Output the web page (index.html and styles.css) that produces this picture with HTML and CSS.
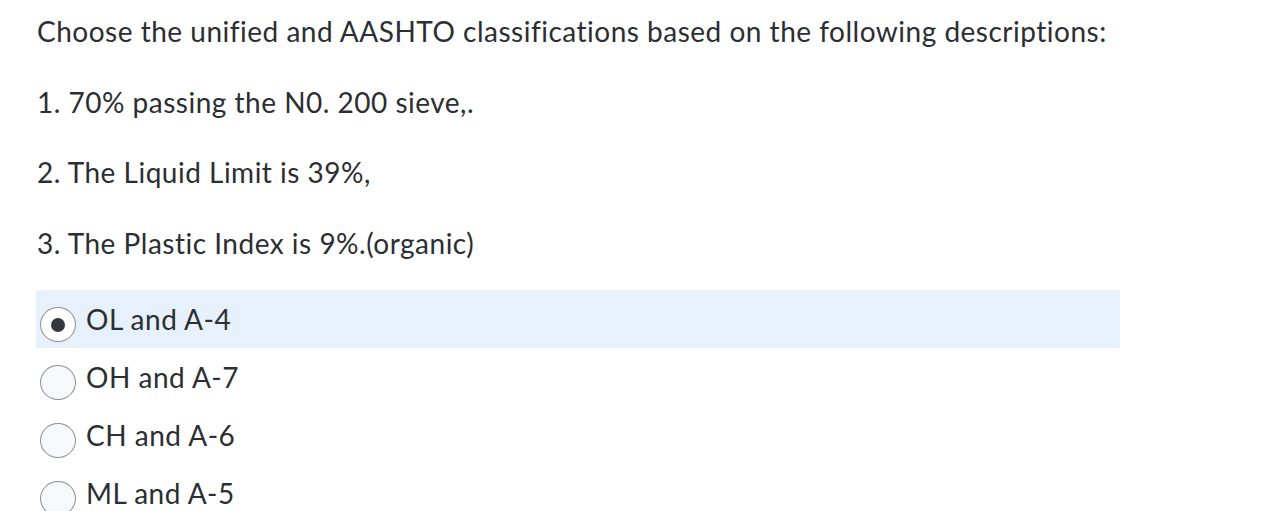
FILE: index.html
```html
<!DOCTYPE html>
<html lang="en">
<head>
<meta charset="utf-8">
<title>Question</title>
<link rel="stylesheet" href="styles.css">
</head>
<body>
<div class="question">
  <p class="q-text">Choose the unified and AASHTO classifications based on the following descriptions:</p>
  <p class="q-text">1. 70% passing the N0. 200 sieve,.</p>
  <p class="q-text">2. The Liquid Limit is 39%,</p>
  <p class="q-text last">3. The Plastic Index is 9%.(organic)</p>
  <ul class="answers">
    <li class="answer selected"><span class="radio checked"></span><span class="label">OL and A-4</span></li>
    <li class="answer"><span class="radio"></span><span class="label">OH and A-7</span></li>
    <li class="answer"><span class="radio"></span><span class="label">CH and A-6</span></li>
    <li class="answer"><span class="radio"></span><span class="label">ML and A-5</span></li>
  </ul>
</div>
</body>
</html>
```
FILE: styles.css
```css
html, body {
  margin: 0;
  padding: 0;
  background: #ffffff;
}
body {
  font-family: Lato, "Noto Sans", sans-serif;
  font-size: 28px;
  color: #2b2e32;
  font-variant-ligatures: none;
  letter-spacing: 0.5px;
  overflow: hidden;
}
.question {
  padding: 10px 0 0 36px;
  width: 1084px;
}
.q-text {
  margin: 0 0 28px 1px;
  line-height: 42.5px;
}
.q-text.last {
  margin-bottom: 0;
}
.answers {
  list-style: none;
  margin: 26px 0 0 0;
  padding: 0;
}
.answer {
  display: flex;
  align-items: flex-start;
  height: 58px;
}
.answer.selected {
  background: #e6f1fb;
}
.radio {
  box-sizing: border-box;
  width: 36px;
  height: 35px;
  margin: 17px 0 0 4px;
  border: 1px solid #8c9094;
  border-radius: 50%;
  background: #f6f8fc;
  display: flex;
  align-items: center;
  justify-content: center;
  flex-shrink: 0;
}
.radio.checked {
  background: #ffffff;
}
.radio.checked::after {
  content: "";
  width: 14px;
  height: 14px;
  border-radius: 50%;
  background: #34383c;
}
.label {
  margin: 8px 0 0 10px;
  line-height: 42px;
}
```
